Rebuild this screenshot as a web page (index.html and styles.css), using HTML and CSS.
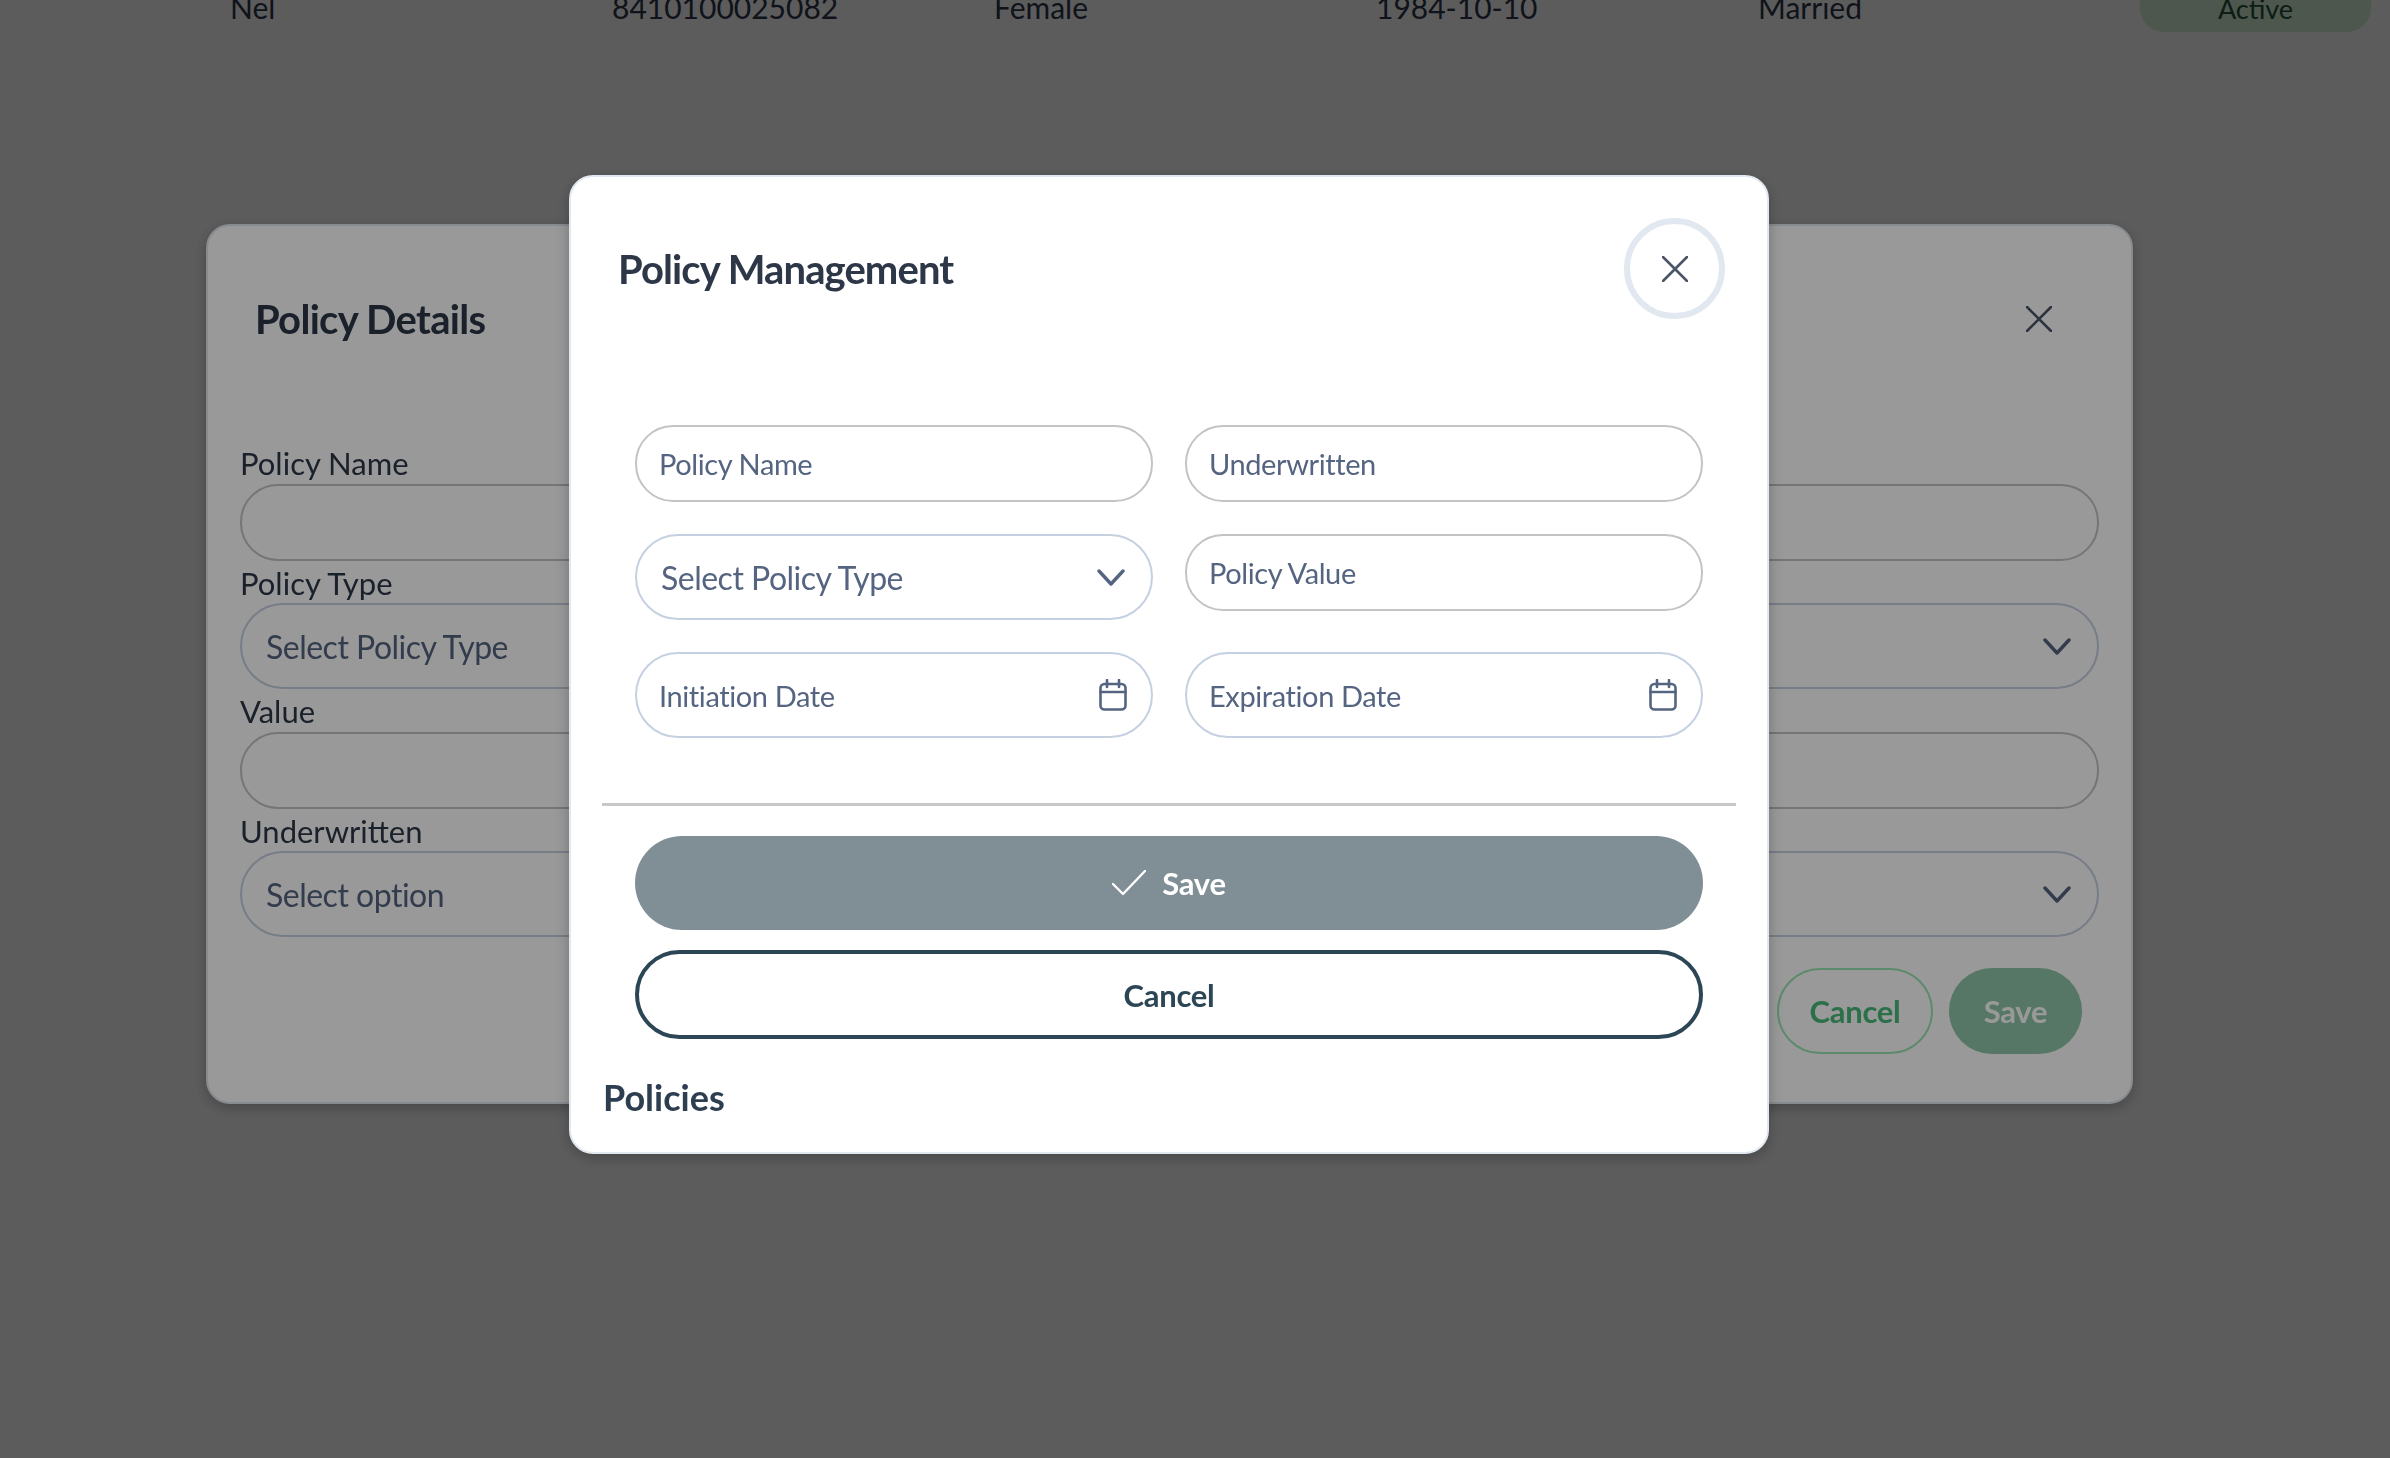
FILE: index.html
```html
<!DOCTYPE html>
<html lang="en">
<head>

    <meta charset="utf-8">

    <title>Policy Management</title>

    <link rel="stylesheet" href="styles.css">

</head>
<body>

    <div class="client_row">
        <div>Nel</div>
        <div>8410100025082</div>
        <div>Female</div>
        <div>1984-10-10</div>
        <div>Married</div>
        <div class="status">Active</div>
    </div>

    <!-- policy details, sits behind the second modal -->
    <div class="overlay">
        <div class="modal details">
            <div class="details_head">
                <h2>Policy Details</h2>
                <svg class="icon_x" viewBox="0 0 26 26"><path d="M1 1L25 25M25 1L1 25"/></svg>
            </div>
            <label>Policy Name</label>
            <div class="field"></div>
            <label>Policy Type</label>
            <div class="field tall blue pick">
                <span class="big">Select Policy Type</span>
                <svg class="icon_chevron" viewBox="0 0 28 17"><path d="M2 2L14 15L26 2"/></svg>
            </div>
            <label>Value</label>
            <div class="field"></div>
            <label>Underwritten</label>
            <div class="field tall blue pick">
                <span class="big">Select option</span>
                <svg class="icon_chevron" viewBox="0 0 28 17"><path d="M2 2L14 15L26 2"/></svg>
            </div>
            <div class="details_actions">
                <div class="btn_green_line">Cancel</div>
                <div class="btn_green">Save</div>
            </div>
        </div>
    </div>

    <!-- policy management -->
    <div class="overlay">
        <div class="modal manage">
            <div class="manage_head">
                <h2>Policy Management</h2>
                <div class="close_ring">
                    <svg class="icon_x" viewBox="0 0 26 26"><path d="M1 1L25 25M25 1L1 25"/></svg>
                </div>
            </div>

            <div class="manage_form">
                <div class="field">Policy Name</div>
                <div class="field">Underwritten</div>
                <div class="field tall blue pick">
                    <span class="big">Select Policy Type</span>
                    <svg class="icon_chevron" viewBox="0 0 28 17"><path d="M2 2L14 15L26 2"/></svg>
                </div>
                <div class="field">Policy Value</div>
                <div class="field tall blue">
                    Initiation Date
                    <svg class="icon_cal" viewBox="0 0 28 32"><rect x="1.5" y="5" width="25" height="25.5" rx="4"/><path d="M1.5 13H26.5M8 1V8M20 1V8"/></svg>
                </div>
                <div class="field tall blue">
                    Expiration Date
                    <svg class="icon_cal" viewBox="0 0 28 32"><rect x="1.5" y="5" width="25" height="25.5" rx="4"/><path d="M1.5 13H26.5M8 1V8M20 1V8"/></svg>
                </div>
            </div>

            <hr>

            <div class="manage_actions">
                <div class="btn_save">
                    <svg class="icon_check" viewBox="0 0 34 26"><path d="M1 14L11 24L33 1"/></svg>
                    Save
                </div>
                <div class="btn_cancel">Cancel</div>
            </div>

            <h3>Policies</h3>
        </div>
    </div>

</body>
</html>
```

FILE: styles.css
```css
html, body {
    width: 100%;
    height: 100%;
    margin: 0;
    overflow: hidden;
}
body {
    background: #fff;
    font-family: "Lato", "Open Sans", sans-serif;
    color: #2d3748;
}
h2, h3 {
    margin: 0;
    font-weight: 700;
}

/* table row left over behind the modals */
.client_row {
    display: grid;
    grid-template-columns: repeat(5, 382px) 231px;
    align-items: center;
    margin: -18px 0 0 230px;
    height: 50px;
    font-size: 30px;
}
.status {
    text-align: center;
    line-height: 46px;
    padding-top: 4px;
    background: #d9f0d6;
    border-radius: 0 0 24px 24px;
    color: #22543d;
    font-size: 27px;
}

.overlay {
    position: fixed;
    top: 0;
    left: 0;
    width: 100%;
    height: 100%;
    background: rgba(0,0,0,0.4);
}
.modal {
    box-sizing: border-box;
    background: #fff;
    border: 2px solid #e2e8f0;
    border-radius: 24px;
    box-shadow: 0 4px 14px rgba(0,0,0,0.25);
}

/* shared */
.field {
    box-sizing: border-box;
    display: flex;
    align-items: center;
    justify-content: space-between;
    height: 77px;
    padding: 0 22px;
    border: 2px solid #c4c4c4;
    border-radius: 38px;
    font-size: 29px;
    letter-spacing: -0.4px;
    color: #556480;
}
.field.tall {
    height: 86px;
    border-radius: 43px;
}
.field.blue {
    border-color: #c5d0e0;
}
.field.pick {
    padding-left: 24px;
    padding-right: 26px;
}
.big {
    font-size: 32px;
    letter-spacing: -0.5px;
}
svg {
    display: block;
    flex: none;
    fill: none;
    stroke-linecap: round;
    stroke-linejoin: round;
}
.icon_x {
    width: 26px;
    height: 26px;
    stroke: #4a5568;
    stroke-width: 2.6;
}
.icon_chevron {
    width: 28px;
    height: 17px;
    stroke: #556480;
    stroke-width: 3.4;
}
.icon_cal {
    width: 28px;
    height: 32px;
    margin-right: 2px;
    stroke: #556480;
    stroke-width: 2.6;
}
.icon_check {
    width: 34px;
    height: 26px;
    stroke: #fff;
    stroke-width: 2.4;
}

/* back modal */
.details {
    width: 1927px;
    height: 880px;
    margin: 224px 0 0 206px;
    padding: 0 32px;
}
.details_head {
    display: flex;
    align-items: center;
    justify-content: space-between;
    height: 186px;
    padding: 0 47px 0 15px;
    margin-bottom: 29px;
}
.details_head h2 {
    font-size: 40px;
    letter-spacing: -0.7px;
}
.details label {
    display: block;
    height: 42.5px;
    line-height: 44px;
    font-size: 31px;
}
.details_actions {
    display: flex;
    justify-content: flex-end;
    gap: 16px;
    margin-top: 30.5px;
    padding-right: 17px;
}
.btn_green_line, .btn_green {
    box-sizing: border-box;
    display: flex;
    align-items: center;
    justify-content: center;
    height: 86px;
    border-radius: 43px;
    font-size: 31px;
    letter-spacing: -0.3px;
    font-weight: 700;
}
.btn_green_line {
    width: 156px;
    border: 2px solid #9ae6b4;
    color: #48bb78;
}
.btn_green {
    width: 133px;
    background: #8fc7a9;
    color: #fff;
}

/* front modal */
.manage {
    width: 1200px;
    height: 979px;
    margin: 175px 0 0 569px;
    padding: 0 31px;
}
.manage_head {
    display: flex;
    align-items: center;
    justify-content: space-between;
    padding: 41px 11px 0 16px;
}
.manage_head h2 {
    font-size: 40px;
    letter-spacing: -0.9px;
}
.close_ring {
    box-sizing: border-box;
    display: flex;
    align-items: center;
    justify-content: center;
    width: 101px;
    height: 101px;
    border: 6px solid #e2e8f0;
    border-radius: 50%;
}
.manage_form {
    display: grid;
    grid-template-columns: 518px 518px;
    gap: 32px;
    align-items: start;
    margin-top: 106px;
    padding: 0 33px;
}
.manage hr {
    height: 3px;
    margin: 65px 0 30px;
    border: 0;
    background: #c8c8c8;
}
.manage_actions {
    display: flex;
    flex-direction: column;
    gap: 20px;
    padding: 0 33px;
}
.btn_save, .btn_cancel {
    box-sizing: border-box;
    display: flex;
    align-items: center;
    justify-content: center;
    font-size: 31px;
    letter-spacing: -0.3px;
    font-weight: 700;
}
.btn_save {
    gap: 16px;
    height: 94px;
    border-radius: 47px;
    background: #808e96;
    color: #fff;
}
.btn_cancel {
    height: 89px;
    border: 4px solid #2c4656;
    border-radius: 45px;
    color: #2c4656;
}
.manage h3 {
    margin-top: 36px;
    padding-left: 1px;
    font-size: 36px;
    line-height: 44px;
    color: #2d3e50;
}
```
